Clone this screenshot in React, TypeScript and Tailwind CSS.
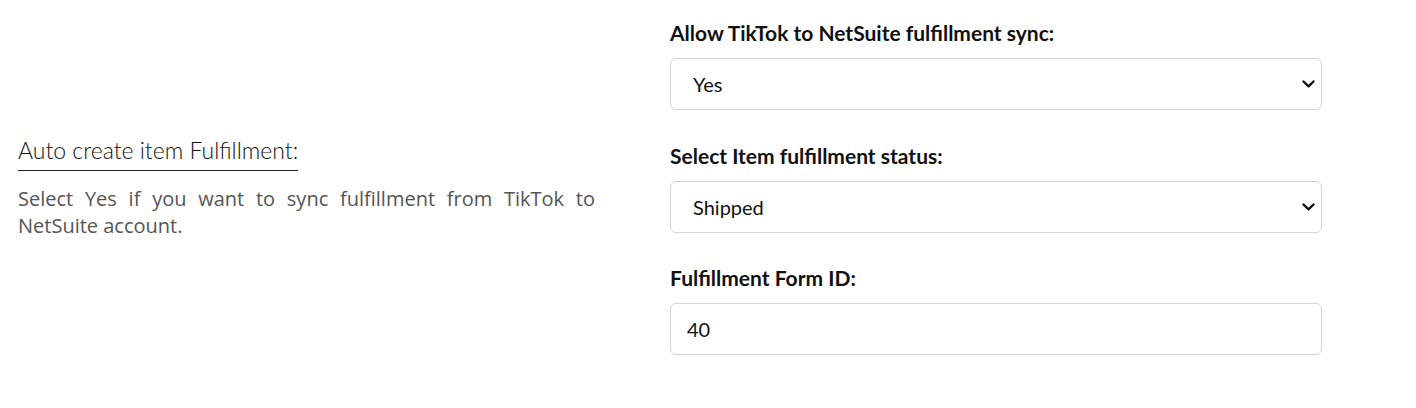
import { useState } from "react";

const Chevron = () => (
  <svg
    width="13"
    height="8"
    viewBox="0 0 13 8"
    className="pointer-events-none absolute right-[7px] top-1/2 -translate-y-1/2"
    fill="none"
    stroke="#111"
    strokeWidth="2.4"
    strokeLinecap="round"
    strokeLinejoin="round"
  >
    <polyline points="1.5,1.5 6.5,6.3 11.5,1.5" />
  </svg>
);

function SelectField({
  label,
  value,
  options,
  onChange,
}: {
  label: string;
  value: string;
  options: string[];
  onChange: (v: string) => void;
}) {
  return (
    <div>
      <label className="block text-[21px] leading-[25px] font-bold text-[#111] mb-[13px]">
        {label}
      </label>
      <div className="relative">
        <select
          value={value}
          onChange={(e) => onChange(e.target.value)}
          className="appearance-none w-full h-[52px] rounded-[6px] border border-[#d4d4d4] bg-white pl-[22px] pr-10 text-[20px] text-[#111] outline-none"
        >
          {options.map((o) => (
            <option key={o}>{o}</option>
          ))}
        </select>
        <Chevron />
      </div>
    </div>
  );
}

export default function App() {
  const [sync, setSync] = useState("Yes");
  const [status, setStatus] = useState("Shipped");
  const [formId, setFormId] = useState("40");

  return (
    <div className="w-[1416px] h-[408px] bg-white font-['Lato',sans-serif]">
      <div className="flex items-center pl-[18px]">
        <div className="w-[577px] shrink-0">
          <h3 className="inline-block text-[23px] leading-[26px] font-light text-[#111] pb-[7px] border-b border-[#222]">
            Auto create item Fulfillment:
          </h3>
          <p className="mt-[14px] text-[20px] leading-[27px] text-[#555] text-justify font-['Open_Sans',sans-serif]">
            Select Yes if you want to sync fulfillment from TikTok to NetSuite account.
          </p>
        </div>

        <div className="ml-[75px] w-[652px] flex flex-col gap-[32.5px] pt-[20px] pb-[20px]">
          <SelectField
            label="Allow TikTok to NetSuite fulfillment sync:"
            value={sync}
            options={["Yes", "No"]}
            onChange={setSync}
          />
          <SelectField
            label="Select Item fulfillment status:"
            value={status}
            options={["Shipped", "Picked", "Packed"]}
            onChange={setStatus}
          />
          <div>
            <label className="block text-[21px] leading-[25px] font-bold text-[#111] mb-[13px]">
              Fulfillment Form ID:
            </label>
            <input
              value={formId}
              onChange={(e) => setFormId(e.target.value)}
              className="w-full h-[52px] rounded-[6px] border border-[#d4d4d4] bg-white px-[16px] text-[20px] text-[#111] outline-none"
            />
          </div>
        </div>
      </div>
    </div>
  );
}
